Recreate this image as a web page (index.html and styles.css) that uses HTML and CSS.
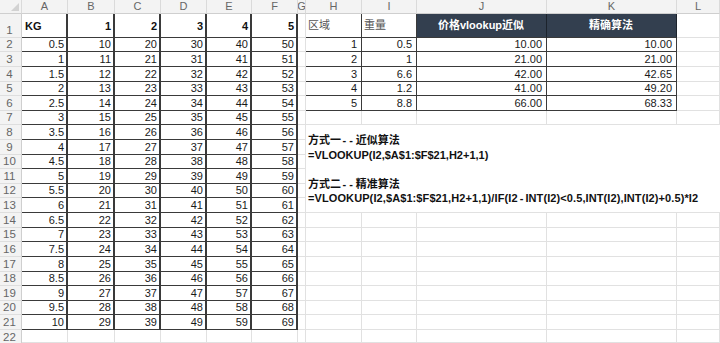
FILE: index.html
```html
<!DOCTYPE html>
<html lang="zh-CN">
<head>
<meta charset="utf-8">
<title>VLOOKUP</title>
<link rel="stylesheet" href="styles.css">
</head>
<body>
<div class="sheet">
  <div class="hd corner"><span class="tri"></span></div>
  <div class="hd">A</div><div class="hd">B</div><div class="hd">C</div><div class="hd">D</div><div class="hd">E</div><div class="hd">F</div><div class="hd">G</div><div class="hd">H</div><div class="hd">I</div><div class="hd">J</div><div class="hd">K</div><div class="hd">L</div>

  <div class="rh">1</div>
  <div class="c t b r1">KG</div><div class="c t b n r1">1</div><div class="c t b n r1">2</div><div class="c t b n r1">3</div><div class="c t b n r1">4</div><div class="c t b n r1">5</div>
  <div class="c"></div>
  <div class="c k lbl">区域</div><div class="c k lbl">重量</div><div class="c k dk">价格vlookup近似</div><div class="c k dk">精确算法</div><div class="c"></div>

  <div class="rh">2</div>
  <div class="c t n">0.5</div><div class="c t n">10</div><div class="c t n">20</div><div class="c t n">30</div><div class="c t n">40</div><div class="c t n">50</div>
  <div class="c"></div>
  <div class="c k n">1</div><div class="c k n">0.5</div><div class="c k n">10.00</div><div class="c k n">10.00</div><div class="c"></div>

  <div class="rh">3</div>
  <div class="c t n">1</div><div class="c t n">11</div><div class="c t n">21</div><div class="c t n">31</div><div class="c t n">41</div><div class="c t n">51</div>
  <div class="c"></div>
  <div class="c k n">2</div><div class="c k n">1</div><div class="c k n">21.00</div><div class="c k n">21.00</div><div class="c"></div>

  <div class="rh">4</div>
  <div class="c t n">1.5</div><div class="c t n">12</div><div class="c t n">22</div><div class="c t n">32</div><div class="c t n">42</div><div class="c t n">52</div>
  <div class="c"></div>
  <div class="c k n">3</div><div class="c k n">6.6</div><div class="c k n">42.00</div><div class="c k n">42.65</div><div class="c"></div>

  <div class="rh">5</div>
  <div class="c t n">2</div><div class="c t n">13</div><div class="c t n">23</div><div class="c t n">33</div><div class="c t n">43</div><div class="c t n">53</div>
  <div class="c"></div>
  <div class="c k n">4</div><div class="c k n">1.2</div><div class="c k n">41.00</div><div class="c k n">49.20</div><div class="c"></div>

  <div class="rh">6</div>
  <div class="c t n">2.5</div><div class="c t n">14</div><div class="c t n">24</div><div class="c t n">34</div><div class="c t n">44</div><div class="c t n">54</div>
  <div class="c"></div>
  <div class="c k n">5</div><div class="c k n">8.8</div><div class="c k n">66.00</div><div class="c k n">68.33</div><div class="c"></div>

  <div class="rh">7</div>
  <div class="c t n">3</div><div class="c t n">15</div><div class="c t n">25</div><div class="c t n">35</div><div class="c t n">45</div><div class="c t n">55</div>
  <div class="c"></div><div class="c"></div><div class="c"></div><div class="c"></div><div class="c"></div><div class="c"></div>

  <div class="rh">8</div>
  <div class="c t n">3.5</div><div class="c t n">16</div><div class="c t n">26</div><div class="c t n">36</div><div class="c t n">46</div><div class="c t n">56</div>
  <div class="c"></div>
  <div class="c merged">
    <div>方式一<span class="dash">--</span>近似算法</div>
    <div>=VLOOKUP(I2,$A$1:$F$21,H2+1,1)</div>
    <div>&nbsp;</div>
    <div>方式二<span class="dash">--</span>精准算法</div>
    <div class="wide">=VLOOKUP(I2,$A$1:$F$21,H2+1,1)/IF(I2<span class="minus">-</span>INT(I2)&lt;0.5,INT(I2),INT(I2)+0.5)*I2</div>
  </div>

  <div class="rh">9</div>
  <div class="c t n">4</div><div class="c t n">17</div><div class="c t n">27</div><div class="c t n">37</div><div class="c t n">47</div><div class="c t n">57</div>
  <div class="c"></div>

  <div class="rh">10</div>
  <div class="c t n">4.5</div><div class="c t n">18</div><div class="c t n">28</div><div class="c t n">38</div><div class="c t n">48</div><div class="c t n">58</div>
  <div class="c"></div>

  <div class="rh">11</div>
  <div class="c t n">5</div><div class="c t n">19</div><div class="c t n">29</div><div class="c t n">39</div><div class="c t n">49</div><div class="c t n">59</div>
  <div class="c"></div>

  <div class="rh">12</div>
  <div class="c t n">5.5</div><div class="c t n">20</div><div class="c t n">30</div><div class="c t n">40</div><div class="c t n">50</div><div class="c t n">60</div>
  <div class="c"></div>

  <div class="rh">13</div>
  <div class="c t n">6</div><div class="c t n">21</div><div class="c t n">31</div><div class="c t n">41</div><div class="c t n">51</div><div class="c t n">61</div>
  <div class="c"></div>

  <div class="rh">14</div>
  <div class="c t n">6.5</div><div class="c t n">22</div><div class="c t n">32</div><div class="c t n">42</div><div class="c t n">52</div><div class="c t n">62</div>
  <div class="c"></div><div class="c"></div><div class="c"></div><div class="c"></div><div class="c"></div><div class="c"></div>

  <div class="rh">15</div>
  <div class="c t n">7</div><div class="c t n">23</div><div class="c t n">33</div><div class="c t n">43</div><div class="c t n">53</div><div class="c t n">63</div>
  <div class="c"></div><div class="c"></div><div class="c"></div><div class="c"></div><div class="c"></div><div class="c"></div>

  <div class="rh">16</div>
  <div class="c t n">7.5</div><div class="c t n">24</div><div class="c t n">34</div><div class="c t n">44</div><div class="c t n">54</div><div class="c t n">64</div>
  <div class="c"></div><div class="c"></div><div class="c"></div><div class="c"></div><div class="c"></div><div class="c"></div>

  <div class="rh">17</div>
  <div class="c t n">8</div><div class="c t n">25</div><div class="c t n">35</div><div class="c t n">45</div><div class="c t n">55</div><div class="c t n">65</div>
  <div class="c"></div><div class="c"></div><div class="c"></div><div class="c"></div><div class="c"></div><div class="c"></div>

  <div class="rh">18</div>
  <div class="c t n">8.5</div><div class="c t n">26</div><div class="c t n">36</div><div class="c t n">46</div><div class="c t n">56</div><div class="c t n">66</div>
  <div class="c"></div><div class="c"></div><div class="c"></div><div class="c"></div><div class="c"></div><div class="c"></div>

  <div class="rh">19</div>
  <div class="c t n">9</div><div class="c t n">27</div><div class="c t n">37</div><div class="c t n">47</div><div class="c t n">57</div><div class="c t n">67</div>
  <div class="c"></div><div class="c"></div><div class="c"></div><div class="c"></div><div class="c"></div><div class="c"></div>

  <div class="rh">20</div>
  <div class="c t n">9.5</div><div class="c t n">28</div><div class="c t n">38</div><div class="c t n">48</div><div class="c t n">58</div><div class="c t n">68</div>
  <div class="c"></div><div class="c"></div><div class="c"></div><div class="c"></div><div class="c"></div><div class="c"></div>

  <div class="rh">21</div>
  <div class="c t n">10</div><div class="c t n">29</div><div class="c t n">39</div><div class="c t n">49</div><div class="c t n">59</div><div class="c t n">69</div>
  <div class="c"></div><div class="c"></div><div class="c"></div><div class="c"></div><div class="c"></div><div class="c"></div>

  <div class="rh last">22</div>
  <div class="c"></div><div class="c"></div><div class="c"></div><div class="c"></div><div class="c"></div><div class="c"></div>
  <div class="c"></div><div class="c"></div><div class="c"></div><div class="c"></div><div class="c"></div><div class="c"></div>
</div>
</body>
</html>
```

FILE: styles.css
```css
html, body {
  margin: 0;
  padding: 0;
  background: #ffffff;
}

body {
  width: 720px;
  height: 343px;
  overflow: hidden;
  font-family: "Liberation Sans", "Noto Sans CJK SC", sans-serif;
  font-size: 11px;
  color: #1a1a1a;
}

.sheet {
  display: grid;
  grid-template-columns: 22px 46px 47px 46px 46px 45px 46px 8px 56px 55px 130px 130px 43px;
  grid-template-rows: 14px 24px 14px 15px 15px 14px 15px 14px 15px 15px 14px 15px 14px 15px 15px 14px 15px 15px 14px 15px 14px 15px 13px;
  width: 720px;
}

.hd {
  background: #f3f3f3;
  color: #666666;
  border-right: 1px solid #dadada;
  border-bottom: 1px solid #cfcfcf;
  display: flex;
  align-items: flex-end;
  justify-content: center;
  line-height: 12px;
  padding-bottom: 1px;
  overflow: hidden;
}

.corner {
  justify-content: flex-end;
  padding: 0 2px 2px 0;
}

.tri {
  width: 0;
  height: 0;
  border-left: 8px solid transparent;
  border-bottom: 8px solid #d2d2d2;
}

.rh {
  background: #f3f3f3;
  color: #666666;
  border-right: 1px solid #cfcfcf;
  border-bottom: 1px solid #dedede;
  display: flex;
  align-items: flex-end;
  justify-content: center;
  padding-right: 2px;
  font-size: 11.5px;
  line-height: 12px;
  padding-bottom: 1px;
}

.rh.last {
  border-bottom: 0;
  padding-bottom: 0;
  line-height: 11px;
}

.c {
  border-right: 1px solid #e1e1e1;
  border-bottom: 1px solid #e1e1e1;
  display: flex;
  align-items: flex-end;
  padding: 0 3px 1px 3px;
  line-height: 12px;
  white-space: nowrap;
  overflow: hidden;
}

.n {
  justify-content: flex-end;
}

.b {
  font-weight: bold;
  color: #111111;
}

.t {
  border-right: 2px solid #3a3a3a;
  border-bottom: 1px solid #3a3a3a;
  padding-right: 2px;
}

.r1 {
  padding-bottom: 5px;
}

.k {
  border-right: 1px solid #3a3a3a;
  border-bottom: 1px solid #3a3a3a;
  padding-right: 4px;
}

.lbl {
  align-items: center;
  color: #555555;
  padding-left: 2px;
}

.dk {
  background: #333f4f;
  color: #ffffff;
  font-weight: bold;
  justify-content: center;
  align-items: center;
  border-right: 1px solid #1c232c;
}

.merged {
  grid-column: span 5;
  grid-row: span 6;
  flex-direction: column;
  align-items: flex-start;
  justify-content: center;
  border-right: 0;
  font-weight: bold;
  color: #111111;
  line-height: 14.5px;
  padding: 2px 0 0 2px;
}

.dash {
  letter-spacing: 3px;
  padding-left: 1.5px;
}

.minus {
  padding: 0 2px;
}

.wide {
  letter-spacing: 0.1px;
}
```
